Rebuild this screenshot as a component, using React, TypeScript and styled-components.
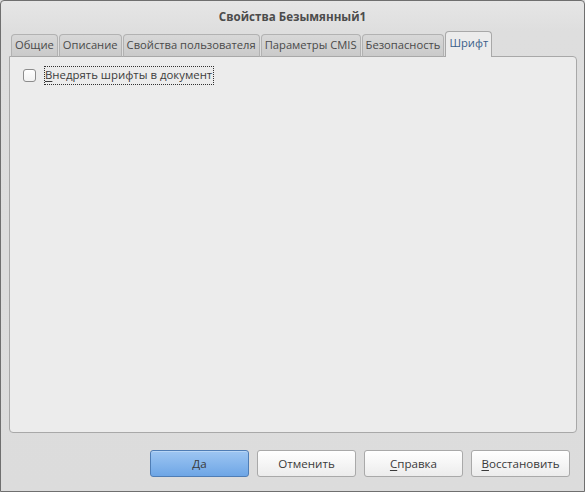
import React from "react";
import styled, { createGlobalStyle } from "styled-components";

const Global = createGlobalStyle`
  html, body { margin: 0; padding: 0; background: #dedede; }
  body { font-family: "Open Sans", "Noto Sans", sans-serif; }
  * { box-sizing: border-box; }
`;

const Window = styled.div`
  width: 585px;
  height: 492px;
  border: 1px solid #6f6f6f;
  border-radius: 4px 4px 0 0;
  background: linear-gradient(#e6e6e6 0px, #dedede 30px, #dcdcdc 100%);
  display: flex;
  flex-direction: column;
  overflow: hidden;
`;

const TitleBar = styled.div`
  height: 29px;
  display: flex;
  align-items: center;
  justify-content: center;
  font-size: 11.6px;
  font-weight: 700;
  color: #4c4c4c;
  padding-top: 1px;
`;

const Body = styled.div`
  flex: 1;
  display: flex;
  flex-direction: column;
  padding: 1px 7px 0 8px;
`;

const TabStrip = styled.div`
  display: flex;
  align-items: flex-end;
  gap: 1px;
  padding-left: 2px;
  height: 26px;
  position: relative;
  z-index: 1;
  margin-bottom: -1px;
`;

const Tab = styled.div<{ $active?: boolean }>`
  height: ${(p) => (p.$active ? "26px" : "23px")};
  padding: 0 3px;
  display: flex;
  align-items: center;
  font-size: 11.2px;
  color: ${(p) => (p.$active ? "#3a5f8a" : "#4a4a4a")};
  border: 1px solid ${(p) => (p.$active ? "#a8a8a8" : "#b2b2b2")};
  border-bottom: ${(p) => (p.$active ? "none" : "1px solid #a8a8a8")};
  border-radius: 4px 4px 0 0;
  background: ${(p) =>
    p.$active ? "#ececec" : "linear-gradient(#d8d8d8, #cacaca)"};
  white-space: nowrap;
  padding-bottom: ${(p) => (p.$active ? "4px" : "2px")};
`;

const Panel = styled.div`
  height: 377px;
  border: 1px solid #a8a8a8;
  border-radius: 0 4px 4px 4px;
  background: #ececec;
  padding: 9px 0 0 13px;
`;

const CheckRow = styled.label`
  display: flex;
  align-items: center;
  gap: 8px;
`;

const Box = styled.span`
  width: 13px;
  height: 13px;
  border: 1px solid #8c8c8c;
  border-radius: 3px;
  background: linear-gradient(#ffffff, #f2f2f2);
`;

const FocusLabel = styled.span`
  font-size: 11.4px;
  color: #3c3c3c;
  border: 1px dotted #303030;
  padding: 0 1px 1px 0;
  line-height: 16px;
`;

const Mn = styled.span`
  text-decoration: underline;
  text-underline-offset: 2px;
`;

const ButtonRow = styled.div`
  display: flex;
  justify-content: flex-end;
  gap: 8px;
  padding: 17px 7px 0 0;
`;

const Button = styled.button<{ $primary?: boolean }>`
  width: 99px;
  height: 27px;
  font-family: "Open Sans", "Noto Sans", sans-serif;
  font-size: 11.6px;
  color: #3a3a3a;
  border-radius: 3px;
  border: 1px solid ${(p) => (p.$primary ? "#4f7db5" : "#a9a9a9")};
  background: ${(p) =>
    p.$primary
      ? "linear-gradient(#9ec6f2, #6ea6e6)"
      : "linear-gradient(#ffffff, #ececec)"};
  box-shadow: ${(p) =>
    p.$primary ? "inset 0 1px 0 #b8d6f6" : "inset 0 1px 0 #ffffff"};
  padding: 0;
`;

export default function App() {
  return (
    <>
      <Global />
      <Window>
        <TitleBar>Свойства Безымянный1</TitleBar>
        <Body>
          <TabStrip>
            <Tab>Общие</Tab>
            <Tab>Описание</Tab>
            <Tab>Свойства пользователя</Tab>
            <Tab>Параметры CMIS</Tab>
            <Tab>Безопасность</Tab>
            <Tab $active>Шрифт</Tab>
          </TabStrip>
          <Panel>
            <CheckRow>
              <Box />
              <FocusLabel>
                <Mn>В</Mn>недрять шрифты в документ
              </FocusLabel>
            </CheckRow>
          </Panel>
          <ButtonRow>
            <Button $primary>Да</Button>
            <Button>Отменить</Button>
            <Button>
              <Mn>С</Mn>правка
            </Button>
            <Button>
              <Mn>В</Mn>осстановить
            </Button>
          </ButtonRow>
        </Body>
      </Window>
    </>
  );
}
